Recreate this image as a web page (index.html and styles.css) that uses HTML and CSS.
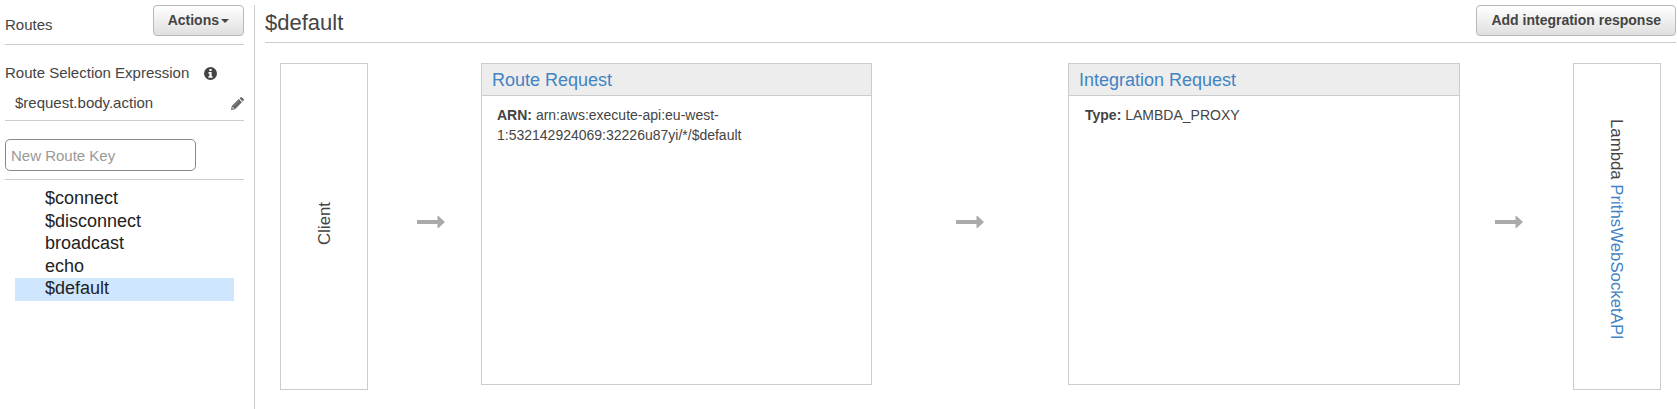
FILE: index.html
```html
<!DOCTYPE html>
<html lang="en">
<head>
<meta charset="utf-8">
<title>Routes</title>
<link rel="stylesheet" href="styles.css">
</head>
<body>
<div class="app">
  <aside class="sidebar">
    <div class="sidebar-head">
      <span class="sidebar-title">Routes</span>
      <button class="btn" type="button">Actions<span class="caret"></span></button>
    </div>
    <section class="selection">
      <div class="selection-label">Route Selection Expression
        <svg class="info" width="13" height="13" viewBox="0 0 13 13"><circle cx="6.5" cy="6.5" r="6.5" fill="#444"/><path d="M5.400 2h2.200v1.900H5.400zM4.400 5h3.200v4.200h1v1.500H4.400V9.200h1V6.500h-1z" fill="#fff"/></svg>
      </div>
      <div class="selection-value">$request.body.action
        <svg class="pencil" width="13" height="13" viewBox="0 0 13 13"><path fill="#666" fill-rule="evenodd" d="M0 13l.8-4L7.700 2.100 10.900 5.300 4 12.200zM1.500 10.200L1.300 11.300 1.800 11.800 2.900 11.500 2.900 10.900 2.200 10.200zM8.500 1.300L9.400.4Q10.200-.3 11 .4L12.600 2Q13.300 2.800 12.600 3.600L11.700 4.500z"/><path d="M3 8.600L7.700 3.900" stroke="#aaa" stroke-width=".6"/></svg>
      </div>
    </section>
    <div class="new-route"><input class="route-input" type="text" placeholder="New Route Key"></div>
    <ul class="routes">
      <li class="route">$connect</li>
      <li class="route">$disconnect</li>
      <li class="route">broadcast</li>
      <li class="route">echo</li>
      <li class="route active">$default</li>
    </ul>
  </aside>
  <main class="main">
    <header class="main-head">
      <h1 class="main-title">$default</h1>
      <button class="btn" type="button">Add integration response</button>
    </header>
    <div class="flow">
      <div class="endpoint endpoint-client"><span class="vertical up">Client</span></div>
      <div class="link link-first"><svg class="arrow" width="28" height="12" viewBox="0 0 28 12"><path d="M0 4h20.500V0h1L28 6l-6.500 6h-1V8H0z" fill="#aaa"/></svg></div>
      <section class="card card-route">
        <h2 class="card-head">Route Request</h2>
        <p class="card-body"><b>ARN:</b> arn:aws:execute-api:eu-west-<br>1:532142924069:32226u87yi/*/$default</p>
      </section>
      <div class="link link-middle"><svg class="arrow" width="28" height="12" viewBox="0 0 28 12"><path d="M0 4h20.500V0h1L28 6l-6.500 6h-1V8H0z" fill="#aaa"/></svg></div>
      <section class="card card-integration">
        <h2 class="card-head">Integration Request</h2>
        <p class="card-body"><b>Type:</b> LAMBDA_PROXY</p>
      </section>
      <div class="link link-last"><svg class="arrow" width="28" height="12" viewBox="0 0 28 12"><path d="M0 4h20.500V0h1L28 6l-6.500 6h-1V8H0z" fill="#aaa"/></svg></div>
      <div class="endpoint endpoint-lambda"><span class="vertical">Lambda <span class="link-text">PrithsWebSocketAPI</span></span></div>
    </div>
  </main>
</div>
</body>
</html>
```
FILE: styles.css
```css
* { box-sizing: border-box; }
body {
  margin: 0;
  background: #fff;
  color: #444;
  font: 15px/20px "Liberation Sans", Arial, sans-serif;
}
.app { display: flex; height: 409px; padding: 5px 1px 0 5px; overflow: hidden; }

.sidebar { width: 250px; padding-right: 10px; border-right: 1px solid #ccc; flex: none; }
.sidebar-head {
  display: flex;
  justify-content: space-between;
  height: 40px;
  border-bottom: 1px solid #ccc;
}
.sidebar-title { padding-top: 10px; }
.btn {
  display: flex;
  align-items: center;
  height: 31px;
  padding: 0 14px 1px;
  border: 1px solid #b8b8b8;
  border-radius: 4px;
  background: linear-gradient(#fff, #dfdfdf);
  color: #444;
  font: bold 14px/20px "Liberation Sans", Arial, sans-serif;
  white-space: nowrap;
}
.caret {
  margin: 2px 0 0 2px;
  border: 4px solid transparent;
  border-top-color: #444;
  border-bottom: 0;
}
.selection { height: 76px; padding-top: 18px; border-bottom: 1px solid #ccc; }
.selection-label { display: flex; align-items: center; gap: 15px; height: 20px; }
.selection-value {
  display: flex;
  align-items: center;
  justify-content: space-between;
  height: 20px;
  margin-top: 10px;
  padding-left: 10px;
}
.new-route { height: 59px; padding-top: 18px; border-bottom: 1px solid #ccc; }
.route-input {
  display: block;
  width: 191px;
  height: 32px;
  padding: 1px 5px;
  border: 1px solid #888;
  border-radius: 5px;
  font: 15px/20px "Liberation Sans", Arial, sans-serif;
}
.route-input::placeholder { color: #999; opacity: 1; }
.routes { margin: 8px 10px 0; padding: 0; list-style: none; }
.route { height: 22.5px; padding-left: 30px; color: #222; font-size: 18px; line-height: 20.5px; }
.active { background: #cfe6ff; }

.main { flex: 1; margin-left: 10px; }
.main-head {
  display: flex;
  justify-content: space-between;
  height: 38px;
  border-bottom: 1px solid #ccc;
}
.main-title { margin: 0; padding-top: 5px; font-size: 22px; font-weight: normal; line-height: 26px; }
.flow { display: flex; align-items: flex-start; padding: 20px 15px 0; }
.endpoint {
  display: flex;
  align-items: center;
  justify-content: center;
  flex: none;
  width: 88px;
  height: 327px;
  border: 1px solid #ccc;
}
.endpoint-client { padding: 0 0 7px 2px; }
.endpoint-lambda { padding: 5px 2px 0 0; }
.vertical { writing-mode: vertical-rl; font-size: 16.8px; line-height: 20px; white-space: nowrap; }
.up { transform: rotate(180deg); }
.link-text, .card-head { color: #4183c4; }
.link { flex: none; padding-top: 153px; }
.link-first { width: 113px; padding-left: 49px; }
.link-middle { width: 196px; padding-left: 84px; }
.link-last { width: 113px; padding-left: 35px; }
.arrow { display: block; }
.card { flex: none; height: 322px; border: 1px solid #ccc; }
.card-route { width: 391px; }
.card-integration { width: 392px; }
.card-head {
  height: 32px;
  margin: 0;
  padding: 0 10px;
  border-bottom: 1px solid #ccc;
  background: #ededed;
  font-size: 18px;
  font-weight: normal;
  line-height: 32px;
}
.card-body { margin: 0; padding: 9px 15px; font-size: 14px; line-height: 20px; }
.card-integration .card-body { padding-left: 16px; }
```
